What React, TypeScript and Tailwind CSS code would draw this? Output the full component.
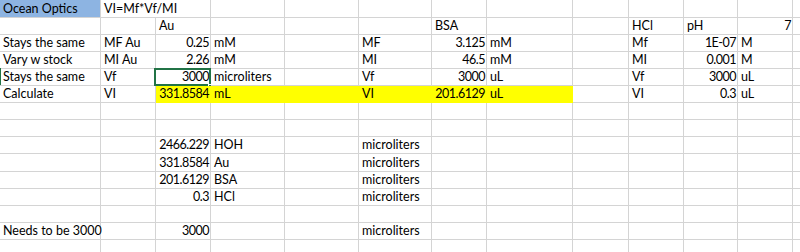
type Cell = { t?: string; r?: boolean; bg?: 'blue' | 'yellow'; spill?: boolean; sel?: boolean };

const E: Cell = {};

// 13 columns: A..L plus the cut-off sliver at the right edge
const rows: Cell[][] = [
  [{ t: 'Ocean Optics', bg: 'blue' }, { t: 'VI=Mf*Vf/MI', spill: true }, E, E, E, E, E, E, E, E, E, E, E],
  [E, E, { t: 'Au' }, E, E, E, { t: 'BSA' }, E, E, { t: 'HCl' }, { t: 'pH' }, { t: '7', r: true }, E],
  [{ t: 'Stays the same' }, { t: 'MF Au' }, { t: '0.25', r: true }, { t: 'mM' }, E, { t: 'MF' }, { t: '3.125', r: true }, { t: 'mM' }, E, { t: 'Mf' }, { t: '1E-07', r: true }, { t: 'M' }, E],
  [{ t: 'Vary w stock' }, { t: 'MI Au' }, { t: '2.26', r: true }, { t: 'mM' }, E, { t: 'MI' }, { t: '46.5', r: true }, { t: 'mM' }, E, { t: 'MI' }, { t: '0.001', r: true }, { t: 'M' }, E],
  [{ t: 'Stays the same' }, { t: 'Vf' }, { t: '3000', r: true, sel: true }, { t: 'microliters' }, E, { t: 'Vf' }, { t: '3000', r: true }, { t: 'uL' }, E, { t: 'Vf' }, { t: '3000', r: true }, { t: 'uL' }, E],
  [
    { t: 'Calculate' },
    { t: 'VI' },
    { t: '331.8584', r: true, bg: 'yellow' },
    { t: 'mL', bg: 'yellow' },
    { bg: 'yellow' },
    { t: 'VI', bg: 'yellow' },
    { t: '201.6129', r: true, bg: 'yellow' },
    { t: 'uL', bg: 'yellow' },
    E,
    { t: 'VI' },
    { t: '0.3', r: true },
    { t: 'uL' },
    E,
  ],
  [E, E, E, E, E, E, E, E, E, E, E, E, E],
  [E, E, E, E, E, E, E, E, E, E, E, E, E],
  [E, E, { t: '2466.229', r: true }, { t: 'HOH' }, E, { t: 'microliters' }, E, E, E, E, E, E, E],
  [E, E, { t: '331.8584', r: true }, { t: 'Au' }, E, { t: 'microliters' }, E, E, E, E, E, E, E],
  [E, E, { t: '201.6129', r: true }, { t: 'BSA' }, E, { t: 'microliters' }, E, E, E, E, E, E, E],
  [E, E, { t: '0.3', r: true }, { t: 'HCl' }, E, { t: 'microliters' }, E, E, E, E, E, E, E],
  [E, E, E, E, E, E, E, E, E, E, E, E, E],
  [{ t: 'Needs to be 3000' }, E, { t: '3000', r: true }, E, E, { t: 'microliters' }, E, E, E, E, E, E, E],
  [E, E, E, E, E, E, E, E, E, E, E, E, E],
];

function cellClass(c: Cell, col: number) {
  const base = 'relative flex items-center pt-[1px] whitespace-nowrap border-b';
  const right = col === 12 ? '' : c.spill ? '' : 'border-r';
  let colour = 'border-[#d4d4d4]';
  if (c.bg === 'yellow') colour = 'bg-[#ffff00] border-[#ffff00]';
  if (c.bg === 'blue') colour = 'bg-[#8db4e2] border-[#d4d4d4]';
  const align = c.r ? 'justify-end pl-[3px] pr-[1px]' : 'justify-start px-[3px]';
  return `${base} ${right} ${colour} ${align}`;
}

export default function App() {
  return (
    <div className="w-[800px] h-[252px] overflow-hidden bg-white relative">
      <div
        className="grid grid-cols-[101px_55px_55px_74px_74px_73px_55px_86px_56px_55px_54px_55px_7px] grid-rows-[18px_17px_17px_17px_17px_17px_17px_17px_17px_18px_17px_17px_17px_17px_13px] text-[12.5px] leading-none text-black"
        style={{ fontFamily: 'Lato, "Open Sans", sans-serif' }}
      >
        {rows.map((row, ri) =>
          row.map((c, ci) => (
            <div key={`${ri}-${ci}`} className={cellClass(c, ci)}>
              {c.t && <span className={c.r ? 'tracking-[-0.5px]' : ''}>{c.t}</span>}
              {c.sel && (
                <>
                  <div className="absolute -left-[2px] -top-[1px] -right-[1px] -bottom-[1px] border-2 border-[#217346] pointer-events-none" />
                  <div className="absolute -right-[3px] -bottom-[4px] w-[5px] h-[5px] bg-[#217346] border border-white" />
                </>
              )}
            </div>
          ))
        )}
      </div>
      {/* row header selection marker peeking in at the left edge */}
      <div className="absolute left-0 top-[68px] w-[1px] h-[17px] bg-[#217346]" />
    </div>
  );
}
